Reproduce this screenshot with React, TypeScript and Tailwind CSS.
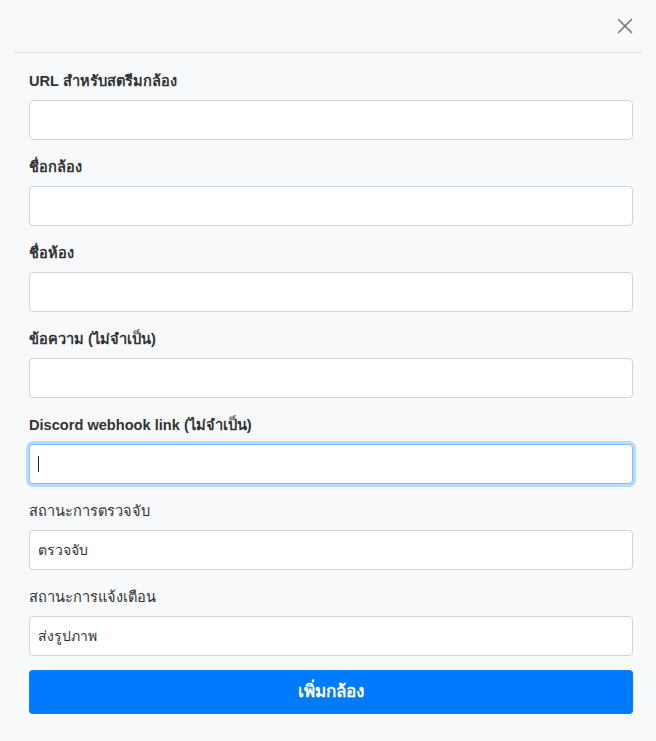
import { X } from "lucide-react";

const fields = [
  { label: "URL สำหรับสตรีมกล้อง", bold: true },
  { label: "ชื่อกล้อง", bold: true },
  { label: "ชื่อห้อง", bold: true },
  { label: "ข้อความ (ไม่จำเป็น)", bold: true },
  { label: "Discord webhook link (ไม่จำเป็น)", bold: true, focused: true },
  { label: "สถานะการตรวจจับ", bold: false, value: "ตรวจจับ" },
  { label: "สถานะการแจ้งเตือน", bold: false, value: "ส่งรูปภาพ" },
];

const App = () => {
  return (
    <div
      className="min-h-[741px] w-[656px] bg-[#f8f9fa] text-[#333]"
      style={{ fontFamily: '"Liberation Sans", "Noto Sans", sans-serif' }}
    >
      <div className="mx-[14px] flex h-[53px] items-center justify-end border-b border-[#dee2e6] pr-[4px]">
        <X className="h-[26px] w-[26px] text-[#777]" strokeWidth={1.4} />
      </div>
      <div className="pl-[29px] pr-[23px] pt-[18px]">
        {fields.map((f) => (
          <div key={f.label} className="mb-[17px]">
            <div
              className={`mb-[8px] h-[21px] text-[14.6px] leading-[21px] ${f.bold ? "font-bold" : "font-medium"}`}
            >
              {f.label}
            </div>
            <div
              className={`flex h-[40px] items-center rounded-[4px] border bg-white px-[8px] text-[14px] ${
                f.focused
                  ? "border-[#80bdff] shadow-[0_0_0_3px_rgba(0,123,255,0.25)]"
                  : "border-[#ced4da]"
              }`}
            >
              {f.focused && <span className="h-[16px] w-px bg-[#222]" />}
              {f.value && <span>{f.value}</span>}
            </div>
          </div>
        ))}
        <button className="-mt-[3px] flex h-[44px] w-full items-center justify-center rounded-[4px] bg-[#007bff] text-[17px] font-bold text-white">
          เพิ่มกล้อง
        </button>
      </div>
    </div>
  );
};

export default App;
